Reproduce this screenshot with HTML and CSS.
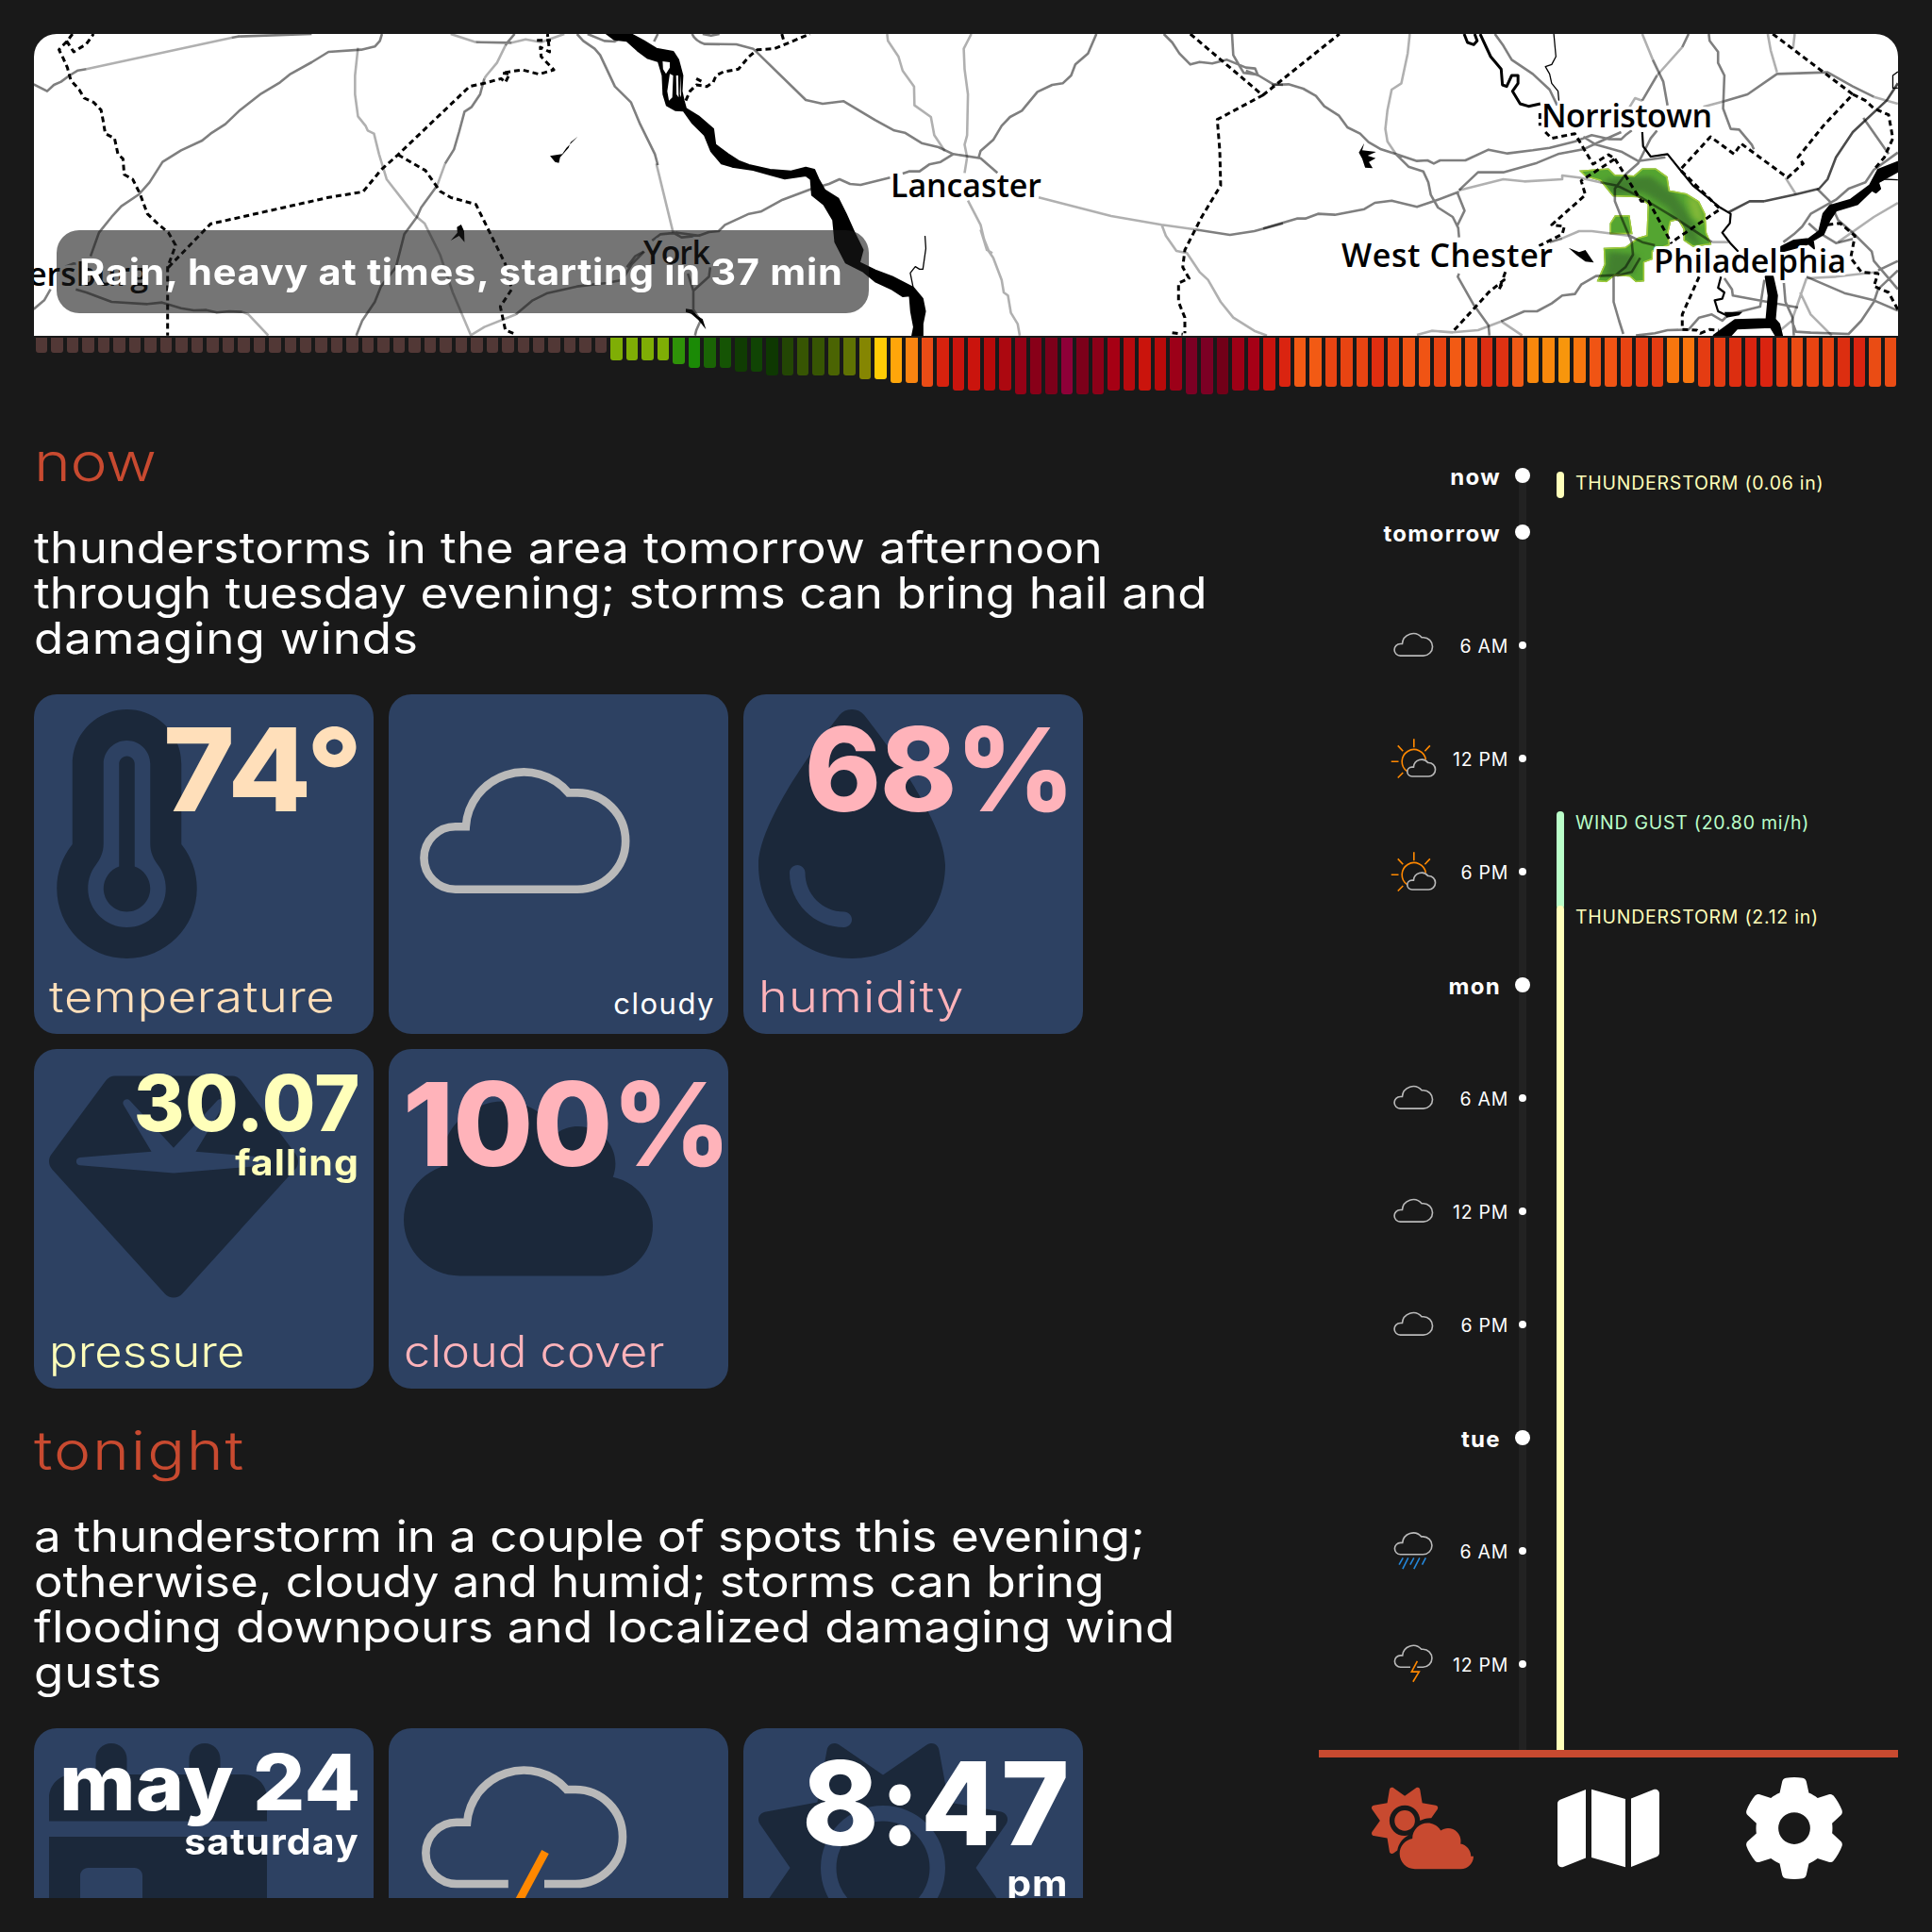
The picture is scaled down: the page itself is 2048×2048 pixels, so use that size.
FILE: index.html
```
<!DOCTYPE html>
<html lang="en">
<head>
<meta charset="utf-8">
<title>Weather</title>
<link rel="stylesheet" href="styles.css">
</head>
<body>
<svg class="defs" aria-hidden="true">
  <symbol id="w-cloud" viewBox="0 0 264 264"><path class="cl" d="M54.7 190.7a33.25 33.25 0 0 1 0-66.5H65.8A61.8 61.8 0 0 1 174.7 88.4H184a51.15 51.15 0 0 1 0 102.3Z"/></symbol>
  <symbol id="w-storm" viewBox="0 0 264 264"><path class="cl" d="M110.8 149H56a32.65 32.65 0 0 1 0-65.3H67.1A60.5 60.5 0 0 1 172.7 49H182a50 50 0 0 1 0 100H149"/><path class="bolt" d="M150 115L118 174.6H160L126 231"/></symbol>
  <symbol id="w-rain" viewBox="0 0 264 264"><path class="cl" d="M56 152a32.65 32.65 0 0 1 0-65.3H67.1A60.5 60.5 0 0 1 172.7 52H182a50 50 0 0 1 0 100Z"/><path class="drop" d="M70 171L48 209M99 171L68 233M131 171L110 209M163 171L131 233M197 171L177 209"/></symbol>
  <symbol id="w-partly" viewBox="0 0 264 264"><path class="bolt" d="M197.5 139A67 67 0 1 0 93 204M131 22V70M4 149H45M41 60L70 91M221 60L192 91M41 240L70 211"/><path class="cl" d="M120 232a25.5 25.5 0 0 1 0-52H129A45 45 0 0 1 209.5 156H213a38 38 0 0 1 0 76Z"/></symbol>
</svg>
<div class="app">
  <section class="radar">
    <svg class="map" viewBox="36 36 1976 320">
      <defs>
        <filter id="soft"><feGaussianBlur stdDeviation="8"/></filter>
        <clipPath id="cells"><path clip-rule="evenodd" d="M730 542L800 535 815 555 860 558 880 535 912 535 940 562 945 605 985 615 1015 640 1030 680 1033 740 1045 778 1000 785 978 765 978 730 965 700 948 705 942 740 945 780 905 800 905 825 885 835 885 895 865 898 850 880 815 877 795 898 772 895 790 840 788 788 840 785 870 755 890 748 893 650 870 628 810 625 795 600 780 575 745 562ZM815 685L850 685 857 745 803 745 803 710Z"/></clipPath>
      </defs>
      <rect x="36" y="36" width="1976" height="320" fill="#fff"/>

      <g transform="translate(1348) scale(.44643 .33333)">
        <g clip-path="url(#cells)">
          <rect x="700" y="500" width="380" height="430" fill="#54a531"/>
          <g filter="url(#soft)" fill="#43802f"><path d="M790 570L900 560 960 620 1000 700 1020 790 985 760 940 660 880 610 810 620Z"/><path d="M800 800L870 810 860 870 790 880Z"/></g>
          <path filter="url(#soft)" fill="#85b938" d="M985 620L1015 640 1030 720 1000 690Z"/>
          <path class="rim" d="M730 542L800 535 815 555 860 558 880 535 912 535 940 562 945 605 985 615 1015 640 1030 680 1033 740 1045 778 1000 785 978 765 978 730 965 700 948 705 942 740 945 780 905 800 905 825 885 835 885 895 865 898 850 880 815 877 795 898 772 895 790 840 788 788 840 785 870 755 890 748 893 650 870 628 810 625 795 600 780 575 745 562ZM815 685L850 685 857 745 803 745 803 710Z"/>
        </g>
      </g>

      <g transform="scale(.44643 .33333)">
        <path class="rd" d="M80 268L112 290 128 270 145 260 165 240 185 224 205 220M550 120L565 116 740 108M907 108L902 130 890 148 858 158 780 165 740 198 690 235 665 262 620 298 570 350 535 395 500 425 480 447 430 478 386 515 355 580 330 618 288 656 265 690 235 740 215 815M1222 108L1208 130 1200 145M1150 250L1140 300 1120 340 1103 355 1090 420 1078 475 1057 520M1038 590L1000 660 990 690 960 745 940 850 905 910 890 960 860 1020 846 1067M1130 134L1215 136M1370 108L1385 130 1412 155 1425 175 1460 275 1498 325 1520 395 1555 490 1562 525M80 983L105 955 120 920M180 920L205 930 265 960 350 967 385 962 430 980 460 987 490 986 515 994 545 990 575 992M1225 1000L1265 955 1300 932 1370 911 1440 900 1478 890 1500 840 1530 800M1395 108L1435 130 1460 132 1475 120M1562 108L1553 132M155 848L175 838 195 842"/>
        <path class="rl" d="M205 220L550 120M850 152L843 240 843 300 850 370 868 400 873 415 888 425 900 490 918 570 985 685 1008 710 1045 810 1075 930 1118 1066L1150 1040 1225 1000M1200 145L1180 200 1155 240 1150 250M1057 520L1038 590M1070 108L1130 134M1215 136L1248 125 1285 134 1340 108M575 992L590 1000 637 1067"/>
        <path class="bd" d="M172 108L160 130 140 158 150 185 160 215 168 255 188 285 200 312 222 325 240 350 245 385 250 425 272 440 280 490 292 505 295 555 315 570 332 615 350 680 375 712 400 740 417 780 398 850 398 1067M158 130L175 165 205 140 222 108M400 850L500 712 600 682 780 628 862 610 905 540 945 492 1115 275 1150 265 1190 250 1200 262 1210 235 1192 232 1240 222 1280 236 1315 222 1285 180 1283 150 1305 165 1300 108M1275 128L1308 128M945 492L1010 542 1045 608 1070 628 1130 650 1200 840 1215 920 1188 975 1200 1050 1222 1062"/>
        <path d="M1372 434L1355 452 1350 470 1330 500 1327 518 1318 515 1306 496 1335 490 1345 470ZM1095 714L1102 735 1103 770 1090 750 1070 765 1086 740 1085 722Z"/>
      </g>

      <g transform="translate(660) scale(.44643 .33333)">
        <path class="river" d="M-40 105L-20 125 10 130 35 160 60 185 85 195 95 240 97 300 105 335 125 350 145 352 165 390 195 430 210 480 235 520 260 530 310 540 350 555 385 568 435 558 447 570 450 620 478 650 500 700 505 770 530 835 570 862 600 895 640 920 665 942 682 940 685 990 692 1040 688 1067H712L712 1030 718 990 712 950 690 915 640 880 600 860 562 835 570 795 550 740 530 680 512 632 480 605 465 570 455 540 435 533 400 545 350 540 300 525 275 512 250 490 220 460 215 410 180 370 150 345 145 320 140 290 142 240 132 190 120 165 80 155 50 130 15 105Z"/>
        <path fill="#fff" d="M95 195L112 198 112 215 103 235 96 220ZM112 235L120 240 118 310 110 320 106 290ZM127 240L132 240 133 310 128 300ZM137 240L139 310 136 300Z"/>
        <path class="st" d="M718 750L720 790 713 856 705 856 695 848 683 868 690 915"/>
        <path d="M150 982L165 985 178 1005 190 1015 198 1048 180 1018 163 998 150 992Z"/>
        <path class="rd" d="M165 108Q172 130 195 140L270 141 310 155 435 318 475 330 525 322 600 382 645 415 670 422 710 455 750 468 785 490 850 503 890 550M1125 108L1105 170 1075 205 1065 240 1045 265 1020 270 985 292 948 352 920 372 900 400 880 445 850 480 845 503M785 490L755 515 728 523 705 545 680 545 665 552M635 565L565 588 540 585 515 570 490 585 450 600 380 635 328 673 300 680 243 715 228 735 205 738 180 750 140 755 120 740M70 765L90 745 130 740 185 750M155 870L168 925 168 985 185 1020 175 1050 172 1067M208 850L205 880 168 925M50 800L30 815 10 850M1360 730L1442 747 1500 735 1568 710M1285 108L1305 135 1322 170 1348 205 1370 197 1400 202 1435 190 1480 215 1502 218 1508 238 1475 232 1465 210 1450 175 1447 108M1480 225L1510 240 1545 268 1568 270M190 108L210 113 230 108"/>
        <path class="rl" d="M80 520L120 740M628 108L630 130 655 180 665 225 692 275 693 335 732 372 740 430 765 480M828 108L810 155 812 220 820 300 818 430 812 460 818 500 812 550M820 638L850 715 858 760 870 800 880 820 900 890 905 930 915 940 922 995 938 1030 943 1067M850 730L865 795 878 805M988 628L1160 687 1280 715 1360 730M1280 715L1290 750 1315 798 1340 805 1370 865 1390 890 1420 960 1450 1010 1500 1052 1530 1067"/>
        <path class="bd" d="M150 320L160 290 175 270 200 275 215 262 222 240 240 228 275 220 300 180 320 158 360 155 445 108M378 108L385 140M175 250L192 262M1348 108L1520 303 1412 380 1418 480 1420 590 1375 690 1335 795 1330 850 1345 885 1320 900 1320 960 1335 1010 1335 1060M1305 1058L1330 1063M1520 303L1702 108"/>
      </g>

      <g transform="translate(1348) scale(.44643 .33333)">
        <path class="rd" d="M0 270L40 268 75 282 105 305 125 338 160 368 180 405 210 425 230 452 260 475 295 490 345 512 370 510 385 520 400 510 460 510 515 476 560 488 620 478 660 470 720 450 760 430 800 442 830 443 840 430 855 415M295 490L325 530 360 545 372 580 378 620 395 660 430 690 443 725 445 755M-20 727L60 695 80 695 110 680 150 683 220 665 245 645 285 638 345 658 385 640 445 610M440 610L458 670 440 720M445 605L490 548 550 548 630 518 680 490 740 475 780 450 830 420M445 870L442 880 480 970 515 1035 517 1067M545 1022L600 990 630 990 665 965 690 940 720 935 735 905 770 878 820 875M915 415L900 440 885 480 870 520 840 555 815 600 815 640 830 690 855 770 858 810 840 850 812 880 812 960 825 1020 835 1062M820 877L855 865 875 820M740 435L770 460 830 482 870 512 935 500M780 580L820 590 880 630 960 695 1045 770M660 770L690 758M850 750L880 770 910 780M530 108L550 145 570 190 620 235 660 285 678 335M905 190L930 260 940 335M990 108L975 150M915 240L880 320M1038 108L1040 130 1060 165 1060 200 1075 240 1072 345 1090 410 1110 412 1140 460 1145 475M1075 322L1130 300 1200 235 1320 230 1380 275 1430 308M1405 375L1465 490M1487 485L1430 540 1410 580 1370 600 1340 635 1280 680 1260 720 1240 745 1215 770M1295 600L1325 640 1345 700 1380 740 1425 800 1430 830 1487 920M1275 710L1300 740 1340 773 1380 760M1487 830L1440 860M1270 880L1360 932 1430 955 1487 988M1487 860L1440 920 1430 960 1400 1020 1370 1062 1280 1058 1245 1055 1235 1020M1075 885L1093 920 1095 940 1250 978M1170 890L1160 975 1085 1000 1070 1020 1045 1000 1015 1010 990 1048 940 1050 910 1060 865 1067M1215 880L1220 960 1237 1010 1240 1067"/>
        <path class="rk" d="M1487 265L1460 320 1380 420 1340 500 1320 570 1300 600 1245 618 1170 640M1170 640L1135 640 1085 675"/>
        <path class="rl" d="M328 108L323 170 308 265 285 285 275 350 270 410 275 450 295 490M445 605L550 570 600 577 690 570 690 558 730 565 780 580M690 758L730 735 760 735 850 750M1045 770L1085 770M345 1065L380 1052 430 1057 490 1050 545 1022 595 1067M880 108L905 190M975 150L915 240M880 320L863 312 850 340M1025 340L1075 322M1430 308L1487 330M1178 108L1185 160 1200 230M1242 108L1238 155M1220 565L1245 618M1487 645L1430 690 1345 770M1270 885L1340 880 1440 865M1270 885L1235 1020 1195 1065M1255 930L1280 1000 1330 1067"/>
        <path class="bd" d="M1190 108L1380 300 1310 400 1250 500 1262 520 1225 565 1115 457 1098 490 1042 435 970 540 1065 665 950 770M1380 300L1410 320 1430 345 1465 365 1475 440 1455 500 1430 540M650 420L665 440 720 425 763 522 800 492 815 505 735 575 745 620 665 715 695 720 690 745 635 782M815 505L878 640 895 640 950 775M637 360V400M555 865L540 920 552 890 515 930 495 960 430 1055M1015 880L975 1000 975 1048 1010 1050 1018 1060 1040 1048 1062 1050M1320 715L1350 710 1385 750 1375 820 1400 865 1440 870 1430 910 1465 930 1487 985"/>
        <path class="rv" d="M457 108L465 135 480 142 488 130 482 108M495 108L520 180 545 220 548 270 558 275 570 240 585 240 585 265 572 290 590 330 610 338 638 330"/>
        <path class="rs" d="M880 420L882 465 900 498 940 490 970 540 1000 590 1065 660 1090 680 1088 710 1070 740 1090 775 1108 800M1067 880L1060 915 1075 930 1070 950 1052 955 1060 990 1080 1003"/>
        <path class="st" d="M670 108L675 180 665 205 650 212 660 235 665 265 680 290 682 320M1487 228L1475 240 1475 280 1487 280M1440 580L1455 570 1487 572"/>
        <path class="river" d="M1487 515L1440 540 1420 590 1375 635 1325 655 1310 680 1300 735 1275 760 1240 765 1210 785V800L1260 782 1275 775 1288 790 1285 765 1310 745 1325 700 1340 670 1390 650 1425 605 1435 612 1445 600 1440 580 1487 545ZM1173 880L1180 940 1175 1015 1100 1018 1050 1067H1090L1105 1045 1185 1040 1197 1067H1212L1205 1030 1195 1015 1200 940 1190 880Z"/>
        <path d="M220 455L215 478 248 483 228 495 247 503 231 515 240 535 222 533 215 505 207 485ZM705 788L730 802 745 795 765 835 745 832 725 812ZM1075 992L1118 992 1110 1003 1080 1010Z"/>
      </g>

      <g class="town">
        <text x="157" y="303" text-anchor="end">Chambersburg</text>
        <text x="682" y="280" textLength="71">York</text>
        <text x="944" y="209" textLength="160">Lancaster</text>
        <text x="1634" y="135" textLength="181">Norristown</text>
        <text x="1422" y="283" textLength="224">West Chester</text>
        <text x="1753" y="289" textLength="204">Philadelphia</text>
      </g>
    </svg>
    <div class="toast"><span>Rain, heavy at times, starting in 37 min</span></div>
    <div class="minutes" id="minutes"></div>
  </section>

  <div class="columns">
    <main class="forecast">
      <section class="period">
        <h2>now</h2>
        <p><span class="line tb">thunderstorms in the area tomorrow afternoon</span><span class="line ta">through tuesday evening; storms can bring hail and</span><span class="line tc">damaging winds</span></p>
        <div class="cards">
          <article class="card peach">
            <svg class="glyph" viewBox="0 0 320 512"><path d="M160 64c-26.5 0-48 21.5-48 48V276.5c0 17.3-7.1 31.9-15.3 42.5C86.2 332.6 80 349.5 80 368c0 44.2 35.8 80 80 80s80-35.8 80-80c0-18.5-6.2-35.4-16.7-48.9c-8.2-10.6-15.3-25.2-15.3-42.5V112c0-26.5-21.5-48-48-48zM48 112C48 50.2 98.1 0 160 0s112 50.1 112 112V276.5c0 .1 .1 .3 .2 .6c.2 .6 .8 1.6 1.7 2.8c18.9 24.4 30.1 55 30.1 88.1c0 79.5-64.5 144-144 144S16 447.5 16 368c0-33.2 11.2-63.8 30.1-88.1c.9-1.2 1.5-2.2 1.7-2.8c.1-.3 .2-.5 .2-.6V112zM208 368c0 26.5-21.5 48-48 48s-48-21.5-48-48c0-20.9 13.4-38.7 32-45.3V112c0-8.8 7.2-16 16-16s16 7.2 16 16V322.7c18.6 6.6 32 24.4 32 45.3z"/></svg>
            <div class="value v-temp">74°</div>
            <div class="label l-temp">temperature</div>
          </article>
          <article class="card">
            <svg class="sky"><use href="#w-cloud"/></svg>
            <div class="caption">cloudy</div>
          </article>
          <article class="card pink">
            <svg class="glyph" viewBox="0 0 384 512"><path d="M192 512C86 512 0 426 0 320C0 228.8 130.2 57.7 166.6 11.7C172.6 4.2 181.5 0 191.1 0h1.8c9.6 0 18.5 4.2 24.5 11.7C253.8 57.7 384 228.8 384 320c0 106-86 192-192 192zM96 336c0-8.8-7.2-16-16-16s-16 7.2-16 16c0 61.9 50.1 112 112 112c8.8 0 16-7.2 16-16s-7.2-16-16-16c-44.2 0-80-35.8-80-80z"/></svg>
            <div class="value v-hum">68%</div>
            <div class="label l-hum">humidity</div>
          </article>
          <article class="card yellow">
            <svg class="glyph" viewBox="0 0 512 512"><path d="M116.7 33.8c4.5-6.1 11.7-9.8 19.3-9.8H376c7.6 0 14.8 3.6 19.3 9.8l112 152c6.8 9.2 6.1 21.9-1.5 30.4l-232 256c-4.5 5-11 7.9-17.8 7.9s-13.2-2.9-17.8-7.9l-232-256c-7.7-8.5-8.3-21.2-1.5-30.4l112-152zm38.5 39.8c-3.3 2.5-4.2 7-2.1 10.5l57.4 95.6L63.3 192c-4.1 .3-7.3 3.8-7.3 8s3.2 7.6 7.3 8l192 16c.4 0 .9 0 1.3 0l192-16c4.1-.3 7.3-3.8 7.3-8s-3.2-7.6-7.3-8L301.5 179.8l57.4-95.6c2.1-3.5 1.2-8.1-2.1-10.5s-7.9-2-10.7 1L256 172.2 165.9 74.6c-2.8-3-7.4-3.4-10.7-1z"/></svg>
            <div class="value mid v-press">30.07</div>
            <div class="sub">falling</div>
            <div class="label l-press">pressure</div>
          </article>
          <article class="card pink">
            <svg class="glyph wide" viewBox="0 0 640 512"><path d="M0 336c0 79.5 64.5 144 144 144H512c70.7 0 128-57.3 128-128c0-61.9-44-113.6-102.4-125.4c4.1-10.7 6.4-22.4 6.4-34.6c0-53-43-96-96-96c-19.7 0-38.1 6-53.3 16.2C367 64.2 315.3 32 256 32C167.6 32 96 103.6 96 192c0 2.7 .1 5.4 .2 8.1C40.2 219.8 0 273.2 0 336z"/></svg>
            <div class="value v-cloud">100%</div>
            <div class="label l-cloud">cloud cover</div>
          </article>
        </div>
      </section>
      <section class="period">
        <h2 class="late">tonight</h2>
        <p><span class="line">a thunderstorm in a couple of spots this evening;</span><span class="line">otherwise, cloudy and humid; storms can bring</span><span class="line ta2">flooding downpours and localized damaging wind</span><span class="line tc">gusts</span></p>
        <div class="cards">
          <article class="card">
            <svg class="glyph" viewBox="0 0 448 512"><path d="M128 0c17.7 0 32 14.3 32 32V64H288V32c0-17.7 14.3-32 32-32s32 14.3 32 32V64h48c26.5 0 48 21.5 48 48v48H0V112C0 85.5 21.5 64 48 64H96V32c0-17.7 14.3-32 32-32zM0 192H448V464c0 26.5-21.5 48-48 48H48c-26.5 0-48-21.5-48-48V192zm80 64c-8.8 0-16 7.2-16 16v96c0 8.8 7.2 16 16 16h96c8.8 0 16-7.2 16-16V272c0-8.8-7.2-16-16-16H80z"/></svg>
            <div class="value mid v-date">may 24</div>
            <div class="sub">saturday</div>
          </article>
          <article class="card">
            <svg class="sky"><use href="#w-storm"/></svg>
          </article>
          <article class="card">
            <svg class="glyph" viewBox="0 0 512 512"><path d="M361.5 1.2c5 2.1 8.6 6.6 9.6 11.9L391 121l107.9 19.8c5.3 1 9.8 4.6 11.9 9.6s1.5 10.7-1.6 15.2L446.9 256l62.3 90.3c3.1 4.5 3.7 10.2 1.6 15.2s-6.6 8.6-11.9 9.6L391 391 371.1 498.9c-1 5.3-4.6 9.8-9.6 11.9s-10.7 1.5-15.2-1.6L256 446.9l-90.3 62.3c-4.5 3.1-10.2 3.7-15.2 1.6s-8.6-6.6-9.6-11.9L121 391 13.1 371.1c-5.3-1-9.8-4.6-11.9-9.6s-1.5-10.7 1.6-15.2L65.1 256 2.8 165.7c-3.1-4.5-3.7-10.2-1.6-15.2s6.6-8.6 11.9-9.6L121 121 140.9 13.1c1-5.3 4.6-9.8 9.6-11.9s10.7-1.5 15.2 1.6L256 65.1 346.3 2.8c4.5-3.1 10.2-3.7 15.2-1.6zM160 256a96 96 0 1 1 192 0 96 96 0 1 1 -192 0zm224 0a128 128 0 1 0 -256 0 128 128 0 1 0 256 0z"/></svg>
            <div class="value v-time">8:47</div>
            <div class="sub">pm</div>
          </article>
        </div>
      </section>
    </main>

    <aside class="side">
      <div class="timeline">
        <ol class="hours">
          <li class="day first"><b>now</b><i></i></li>
          <li class="day"><b>tomorrow</b><i></i></li>
          <li><svg><use href="#w-cloud"/></svg><b>6 AM</b><i></i></li>
          <li><svg><use href="#w-partly"/></svg><b>12 PM</b><i></i></li>
          <li><svg><use href="#w-partly"/></svg><b>6 PM</b><i></i></li>
          <li class="day"><b>mon</b><i></i></li>
          <li><svg><use href="#w-cloud"/></svg><b>6 AM</b><i></i></li>
          <li><svg><use href="#w-cloud"/></svg><b>12 PM</b><i></i></li>
          <li><svg><use href="#w-cloud"/></svg><b>6 PM</b><i></i></li>
          <li class="day"><b>tue</b><i></i></li>
          <li><svg><use href="#w-rain"/></svg><b>6 AM</b><i></i></li>
          <li><svg><use href="#w-storm"/></svg><b>12 PM</b><i></i></li>
        </ol>
        <div class="events">
          <div class="event yellow e-now">THUNDERSTORM (0.06 in)</div>
          <div class="event green e-gust">WIND GUST (20.80 mi/h)</div>
          <div class="event yellow e-storm">THUNDERSTORM (2.12 in)</div>
        </div>
      </div>
      <nav class="tabs">
        <svg class="on" viewBox="0 0 640 512"><path d="M294.2 1.2c5.1 2.1 8.7 6.7 9.6 12.1l14.1 84.7 84.7 14.1c5.4 .9 10 4.5 12.1 9.6s1.5 10.9-1.6 15.4l-38.5 55c-2.2-.1-4.4-.2-6.7-.2c-23.3 0-45.1 6.2-64 17.1l0-1.1c0-53-43-96-96-96s-96 43-96 96s43 96 96 96c8.1 0 15.9-1 23.4-2.9c-36.6 18.1-63.3 53.1-69.8 94.9l-24.4 17c-4.5 3.2-10.3 3.8-15.4 1.6s-8.7-6.7-9.6-12.1L98.1 317.9 13.4 303.8c-5.4-.9-10-4.5-12.1-9.6s-1.5-10.9 1.6-15.4L52.5 208 2.9 137.2c-3.2-4.5-3.8-10.3-1.6-15.4s6.7-8.7 12.1-9.6L98.1 98.1l14.1-84.7c.9-5.4 4.5-10 9.6-12.1s10.9-1.5 15.4 1.6L208 52.5 278.8 2.9c4.5-3.2 10.3-3.8 15.4-1.6zM144 208a64 64 0 1 1 128 0 64 64 0 1 1 -128 0zM639.9 431.9c0 44.2-35.8 80-80 80H271.9c-53 0-96-43-96-96c0-47.6 34.6-87 80-94.6l0-1.3c0-53 43-96 96-96c34.9 0 65.4 18.6 82.2 46.4c13-9.1 28.8-14.4 45.8-14.4c44.2 0 80 35.8 80 80c0 5.9-.6 11.7-1.9 17.2c37.4 6.7 65.8 39.4 65.8 78.7z"/></svg>
        <svg viewBox="0 0 576 512"><path d="M384 476.1L192 421.2V35.9L384 90.8V476.1zm32-1.2V88.4L543.1 37.5c15.8-6.3 32.9 5.3 32.9 22.3V394.6c0 9.8-6 18.6-15.1 22.3L416 474.8zM15.1 95.1L160 37.2V423.6L32.9 474.5C17.1 480.8 0 469.2 0 452.2V117.4c0-9.8 6-18.6 15.1-22.3z"/></svg>
        <svg viewBox="0 0 512 512"><path d="M495.9 166.6c3.2 8.7 .5 18.4-6.4 24.6l-43.3 39.4c1.1 8.3 1.7 16.8 1.7 25.4s-.6 17.1-1.7 25.4l43.3 39.4c6.9 6.2 9.6 15.9 6.4 24.6c-4.4 11.9-9.7 23.3-15.8 34.3l-4.7 8.1c-6.6 11-14 21.4-22.1 31.2c-5.9 7.2-15.7 9.6-24.5 6.8l-55.7-17.7c-13.4 10.3-28.2 18.9-44 25.4l-12.5 57.1c-2 9.1-9 16.3-18.2 17.8c-13.8 2.3-28 3.5-42.5 3.5s-28.7-1.2-42.5-3.5c-9.2-1.5-16.2-8.7-18.2-17.8l-12.5-57.1c-15.8-6.5-30.6-15.1-44-25.4L83.1 425.9c-8.8 2.8-18.6 .3-24.5-6.8c-8.1-9.8-15.5-20.2-22.1-31.2l-4.7-8.1c-6.1-11-11.4-22.4-15.8-34.3c-3.2-8.7-.5-18.4 6.4-24.6l43.3-39.4C64.6 273.1 64 264.6 64 256s.6-17.1 1.7-25.4L22.4 191.2c-6.9-6.2-9.6-15.9-6.4-24.6c4.4-11.9 9.7-23.3 15.8-34.3l4.7-8.1c6.6-11 14-21.4 22.1-31.2c5.9-7.2 15.7-9.6 24.5-6.8l55.7 17.7c13.4-10.3 28.2-18.9 44-25.4l12.5-57.1c2-9.1 9-16.3 18.2-17.8C227.3 1.2 241.5 0 256 0s28.7 1.2 42.5 3.5c9.2 1.5 16.2 8.7 18.2 17.8l12.5 57.1c15.8 6.5 30.6 15.1 44 25.4l55.7-17.7c8.8-2.8 18.6-.3 24.5 6.8c8.1 9.8 15.5 20.2 22.1 31.2l4.7 8.1c6.1 11 11.4 22.4 15.8 34.3zM256 336a80 80 0 1 0 0-160 80 80 0 1 0 0 160z"/></svg>
      </nav>
    </aside>
  </div>
</div>
<script src="minutes.js"></script>
</body>
</html>
```
FILE: styles.css
```
* { box-sizing: border-box; }
body {
  margin: 0;
  background: #191919;
  color: #fff;
  font-family: Inter, "Noto Sans", sans-serif;
}
.defs { position: absolute; width: 0; height: 0; }
.app {
  display: flex;
  flex-direction: column;
  height: 2048px;
  padding: 36px;
  overflow: hidden;
}

/* radar map and minute forecast */
.radar { position: relative; flex: none; height: 424px; }
.map {
  display: block;
  width: 1976px;
  height: 320px;
  border-radius: 24px 24px 0 0;
}
.map path { vector-effect: non-scaling-stroke; }
.rd, .rl, .rk, .bd, .rv, .rs, .st, .rim { fill: none; stroke-linejoin: round; }
.rd { stroke: rgba(0, 0, 0, .5); stroke-width: 2.6px; }
.rk { stroke: rgba(0, 0, 0, .7); stroke-width: 2.6px; }
.rl { stroke: rgba(0, 0, 0, .31); stroke-width: 2.6px; }
.bd { stroke: #000; stroke-width: 3px; stroke-dasharray: 6 4; }
.rv { stroke: #000; stroke-width: 3px; }
.rs { stroke: #000; stroke-width: 2.2px; }
.st { stroke: #000; stroke-width: 1.3px; }
.river { stroke: #000; stroke-width: 2px; stroke-linejoin: round; }
.rim { stroke: #a3cb3a; stroke-width: 3px; }
.town {
  font: 600 34px "Open Sans", "Noto Sans", sans-serif;
  fill: #000;
  stroke: #fff;
  stroke-width: 6px;
  stroke-linejoin: round;
  paint-order: stroke;
}
.toast {
  position: absolute;
  left: 24px;
  top: 208px;
  width: 861px;
  height: 88px;
  padding-left: 24px;
  border-radius: 24px;
  background: rgba(25, 25, 25, .6);
  font-size: 38.5px;
  font-weight: 700;
  line-height: 88px;
  white-space: nowrap;
}
.toast span {
  display: inline-block;
  letter-spacing: .65px;
  transform: scaleX(1.08);
  transform-origin: left;
}
.minutes { display: flex; align-items: flex-start; padding-top: 2px; }
.minutes i { flex: 1; margin: 0 2px; border-radius: 0 0 3px 3px; }

.columns { display: flex; flex: 1; min-height: 0; justify-content: space-between; }

/* forecast periods */
.forecast { width: 1290px; overflow: hidden; }
.period { margin-bottom: 36px; }
h2 {
  height: 60px;
  margin: 0 0 36px;
  color: #c84a30;
  font-size: 57px;
  font-weight: 300;
  line-height: 60px;
  letter-spacing: -.4px;
  transform: scaleX(1.16);
  transform-origin: left;
}
h2.late { letter-spacing: 1.6px; }
p { margin: 0 0 36px; font-size: 46px; line-height: 48px; }
.line {
  display: block;
  white-space: nowrap;
  transform: scaleX(1.11);
  transform-origin: left;
}
.ta { letter-spacing: .1px; }
.ta2 { letter-spacing: .2px; }
.tb { letter-spacing: .36px; }
.tc { letter-spacing: .8px; }

.cards { display: grid; grid-template-columns: repeat(3, 360px); gap: 16px; }
.card {
  position: relative;
  display: flex;
  flex-direction: column;
  align-items: flex-end;
  height: 360px;
  padding: 16px;
  border-radius: 24px;
  background: #2d4162;
}
.glyph { position: absolute; left: 16px; top: 16px; height: 264px; fill: #1b283a; }
.glyph.wide { width: 264px; }
.sky { position: absolute; left: 16px; top: 16px; width: 264px; height: 264px; }
.cl, .bolt, .drop { fill: none; stroke-width: 8.6px; }
.cl { stroke: #b9b9b9; }
.bolt { stroke: #ff8800; }
.drop { stroke: #2486d8; }
.value, .sub, .label, .caption { position: relative; white-space: nowrap; }
.value { font-size: 123px; font-weight: 800; line-height: 128px; transform-origin: right; }
.value.mid { font-size: 82px; line-height: 84px; }
.sub {
  margin-right: -1px;
  font-size: 38px;
  font-weight: 700;
  line-height: 40px;
  letter-spacing: 1px;
  transform: scaleX(1.08);
  transform-origin: right;
}
.label {
  align-self: flex-start;
  margin-top: auto;
  font-size: 46px;
  font-weight: 350;
  line-height: 48px;
  transform: scaleX(1.1);
  transform-origin: left;
}
.caption { margin-top: auto; font-size: 31px; line-height: 32px; letter-spacing: 1.5px; margin-right: -2px; }
.v-temp { transform: scaleX(1.05); margin-right: -4px; }
.v-hum { letter-spacing: -1.5px; margin-right: -6px; }
.v-cloud { letter-spacing: -1px; margin-right: -18px; }
.v-press { letter-spacing: .5px; margin-right: -2px; }
.v-date { letter-spacing: .5px; margin-right: -3px; transform: scaleX(1.06); }
.v-time { letter-spacing: .5px; margin-right: -2px; }
.l-temp { letter-spacing: .6px; transform: scaleX(1.14); }
.l-hum { letter-spacing: 1px; transform: scaleX(1.14); }
.l-press { letter-spacing: .2px; }
.yellow { color: #ffffba; }
.green { color: #baffc9; }
.peach { color: #ffdfba; }
.pink { color: #ffb3ba; }

/* timeline */
.side { display: flex; flex-direction: column; width: 614px; }
.timeline { display: flex; flex: 1; min-height: 0; overflow: hidden; padding-top: 24px; }
.hours {
  width: 224px;
  height: 1500px;
  margin: 0;
  padding: 0;
  list-style: none;
  background: linear-gradient(#222, #222) 212px 20px / 8px 100% no-repeat;
}
.hours li { display: flex; align-items: center; height: 40px; margin-bottom: 80px; }
.hours li.first { margin-bottom: 20px; }
.hours svg { width: 50px; height: 50px; margin-left: 76px; }
.hours b {
  flex: 1;
  padding: 2px 11px 0 0;
  font-size: 19.5px;
  font-weight: 400;
  letter-spacing: .7px;
  text-align: right;
}
.hours i { width: 8px; height: 8px; margin-right: 4px; border-radius: 50%; background: #fff; }
.hours .day b { padding-right: 15px; font-size: 24px; font-weight: 700; letter-spacing: 1.35px; }
.hours .day i { width: 16px; height: 16px; margin-right: 0; }
.events { padding: 16px 0 0 28px; }
.event {
  position: relative;
  padding-left: 20px;
  font-size: 19.5px;
  line-height: 24px;
  letter-spacing: .75px;
  white-space: nowrap;
}
.event::before {
  content: "";
  position: absolute;
  left: 0;
  top: 0;
  bottom: 0;
  width: 8px;
  border-radius: 4px;
  background: currentColor;
}
.e-now { height: 28px; margin-bottom: 332px; }
.e-gust { height: 104px; margin-bottom: -4px; }
.e-storm { height: 1100px; }

/* bottom navigation */
.tabs {
  display: flex;
  flex: none;
  align-items: center;
  justify-content: space-between;
  height: 157px;
  padding: 0 56px;
  border-top: 8px solid #c84a30;
}
.tabs svg { width: 108px; height: 108px; fill: #fff; }
.tabs .on { fill: #c84a30; }
```
FILE: minutes.js
```
// Next two hours of precipitation: [bar height in px, colour, number of minutes]
const minutes = [
  [16, '#523836', 37], [24, '#7fae05', 4], [28, '#2f9208', 1], [32, '#1b8a06', 1],
  [32, '#1a6405', 1], [32, '#155404', 1], [36, '#103c03', 1], [36, '#104404', 1],
  [40, '#0e3802', 1], [40, '#234604', 1], [40, '#375503', 2], [40, '#4b6403', 1],
  [40, '#5f7203', 1], [44, '#858602', 1], [44, '#ffcc05', 1], [48, '#fea60a', 1],
  [48, '#f88410', 1], [52, '#ea4c16', 1], [52, '#d6220e', 1], [56, '#ca140d', 2],
  [56, '#b80a0a', 1], [56, '#ac0810', 1], [60, '#940216', 1], [60, '#880018', 1],
  [60, '#7c001a', 1], [60, '#8e0038', 1], [60, '#7c001a', 1], [60, '#8c0018', 1],
  [56, '#a60014', 1], [56, '#b80a0e', 1], [56, '#ca140c', 1], [56, '#b80a0a', 1],
  [56, '#9c0018', 1], [60, '#7c0024', 2], [60, '#720018', 1], [56, '#9e0016', 1],
  [56, '#a60016', 1], [56, '#ca140e', 1], [52, '#da2410', 1], [52, '#f25a14', 2],
  [52, '#e84412', 3], [52, '#e02e10', 1], [52, '#e84412', 1], [52, '#f05414', 2],
  [52, '#e84412', 1], [52, '#f25a14', 1], [52, '#f05414', 1], [52, '#dc2e12', 1],
  [52, '#e03212', 1], [52, '#f05a16', 1], [48, '#f8880c', 2], [48, '#f8960c', 1],
  [48, '#f8760e', 1], [52, '#f05414', 2], [52, '#e84412', 1], [52, '#e43c12', 2],
  [48, '#f8760e', 2], [52, '#e43c12', 2], [52, '#dc2e10', 1], [52, '#da2410', 2],
  [52, '#e43c12', 1], [52, '#ea4c14', 1], [52, '#e84412', 2], [52, '#dc2e10', 1],
  [52, '#da2410', 1], [52, '#ea4c14', 2]
];
const strip = document.getElementById('minutes');
for (const [height, colour, count] of minutes) {
  for (let i = 0; i < count; i++) {
    const bar = document.createElement('i');
    bar.style.height = height + 'px';
    bar.style.background = colour;
    strip.append(bar);
  }
}
```
